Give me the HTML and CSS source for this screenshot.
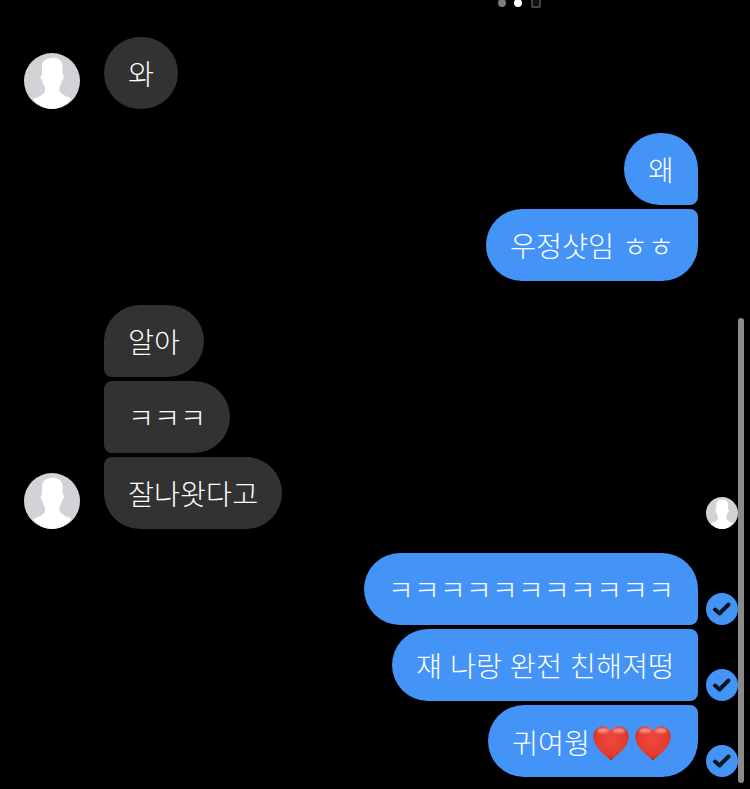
FILE: index.html

```html
<!DOCTYPE html>
<html lang="ko">
<head>
  <meta charset="UTF-8">
  <title>대화</title>
  <link rel="stylesheet" href="styles.css">
</head>
<body>
  <svg class="defs" width="0" height="0" aria-hidden="true">
    <defs>
      <symbol id="avatar" viewBox="0 0 56 56">
        <circle cx="28" cy="28" r="28" fill="#d2d2d7"/>
        <path d="M28 5c-7 0-10 3.500-10 9v8c-1 0-1.500 1-1.300 2.500.2 1.500.8 3 1.800 3.300.5 2.700 1.300 5 2.500 6.700v3c0 3-4 5.500-12 8.500C13 52 20 56 28 56s15-4 19.500-10.500c-8-3-12-5.500-12-8.500v-3c1.200-1.700 2-4 2.500-6.700 1-.3 1.600-1.800 1.800-3.300.2-1.500-.3-2.500-1.300-2.500v-8c0-5.500-3.500-9-10.500-9z" fill="#fff"/>
      </symbol>
      <symbol id="check" viewBox="0 0 32 32">
        <circle cx="16" cy="16" r="16" fill="#4494f8"/>
        <path d="M9 16.500l4.500 4 9-9" fill="none" stroke="#0b1522" stroke-width="4" stroke-linecap="round" stroke-linejoin="round"/>
      </symbol>
      <radialGradient id="heartfill" cx="0.5" cy="0.4" r="0.62">
        <stop offset="0" stop-color="#ee4a3c"/>
        <stop offset="0.7" stop-color="#e33a2e"/>
        <stop offset="1" stop-color="#b8241c"/>
      </radialGradient>
      <filter id="soft" x="-30%" y="-30%" width="160%" height="160%">
        <feGaussianBlur stdDeviation="1.200"/>
      </filter>
      <symbol id="heart" viewBox="0 0 36 35">
        <path d="M18 34.700C13.500 29.500.3 22 .3 10.800.3 4.500 4.800.3 10.200.3c3.500 0 6.300 2 7.800 5.200C19.500 2.300 22.300.3 25.800.3c5.400 0 9.900 4.200 9.900 10.500C35.700 22 22.500 29.500 18 34.700z" fill="url(#heartfill)"/>
        <ellipse cx="10" cy="4.500" rx="6" ry="2.300" fill="#fbb0a4" opacity="0.75" filter="url(#soft)"/>
        <ellipse cx="26" cy="4.500" rx="6" ry="2.300" fill="#fbb0a4" opacity="0.75" filter="url(#soft)"/>
      </symbol>
    </defs>
  </svg>

  <div class="pager">
    <span class="dot"></span>
    <span class="dot on"></span>
    <span class="tile"></span>
  </div>

  <div class="chat">
    <div class="group">
      <div class="row">
        <svg class="avatar"><use href="#avatar"/></svg>
        <div class="bubble in solo">와</div>
      </div>
    </div>

    <div class="group">
      <div class="row out">
        <div class="bubble me top">왜</div>
        <span class="slot"></span>
      </div>
      <div class="row out">
        <div class="bubble me last">우정샷임 ㅎㅎ</div>
        <span class="slot"></span>
      </div>
    </div>

    <div class="group">
      <div class="row">
        <span class="avatar"></span>
        <div class="bubble in first">알아</div>
      </div>
      <div class="row">
        <span class="avatar"></span>
        <div class="bubble in mid">ㅋㅋㅋ</div>
      </div>
      <div class="row">
        <svg class="avatar"><use href="#avatar"/></svg>
        <div class="bubble in last-in">잘나왓다고</div>
        <svg class="read"><use href="#avatar"/></svg>
      </div>
    </div>

    <div class="group">
      <div class="row out">
        <div class="bubble me top">ㅋㅋㅋㅋㅋㅋㅋㅋㅋㅋㅋ</div>
        <svg class="slot"><use href="#check"/></svg>
      </div>
      <div class="row out">
        <div class="bubble me mid-me">쟤 나랑 완전 친해져떵</div>
        <svg class="slot"><use href="#check"/></svg>
      </div>
      <div class="row out">
        <div class="bubble me last emoji">귀여웡<svg class="heart first-heart"><use href="#heart"/></svg><svg class="heart"><use href="#heart"/></svg></div>
        <svg class="slot"><use href="#check"/></svg>
      </div>
    </div>
  </div>

  <div class="scrollbar"></div>
</body>
</html>
```

FILE: styles.css

```css
html, body {
  height: 100%;
}

body {
  margin: 0;
  background: #000;
  color: #fff;
  font-family: "Noto Sans CJK KR", "Noto Sans", sans-serif;
  overflow: hidden;
  position: relative;
}

.defs {
  position: absolute;
}

.pager {
  display: flex;
  align-items: center;
  gap: 8px;
  height: 8px;
  margin-top: -1px;
  padding-left: 498px;
}

.dot {
  width: 8px;
  height: 8px;
  border-radius: 50%;
  background: #7c7c7c;
}

.dot.on {
  background: #fff;
}

.tile {
  width: 6px;
  height: 6px;
  margin-left: 1px;
  border: 2px solid #444;
  border-radius: 2px;
  background: #111;
}

.chat {
  display: flex;
  flex-direction: column;
  gap: 24px;
  padding: 30px 12px 0 24px;
}

.group {
  display: flex;
  flex-direction: column;
  gap: 4px;
}

.row {
  display: flex;
  align-items: flex-end;
  gap: 24px;
}

.row.out {
  justify-content: flex-end;
  gap: 8px;
}

.avatar {
  flex: none;
  width: 56px;
  height: 56px;
}

.read {
  flex: none;
  width: 32px;
  height: 32px;
  margin-left: auto;
}

.slot {
  flex: none;
  width: 32px;
  height: 32px;
}

.bubble {
  box-sizing: border-box;
  display: flex;
  align-items: center;
  height: 72px;
  padding: 1px 24px 0;
  border-radius: 36px;
  font-size: 28.3px;
  font-weight: 300;
  line-height: 1;
  white-space: nowrap;
}

.in {
  background: #323232;
}

.me {
  background: #4494f8;
}

.first {
  border-bottom-left-radius: 8px;
}

.mid {
  border-top-left-radius: 8px;
  border-bottom-left-radius: 8px;
}

.last-in {
  border-top-left-radius: 8px;
}

.top {
  border-bottom-right-radius: 8px;
}

.mid-me {
  border-top-right-radius: 8px;
  border-bottom-right-radius: 8px;
}

.last {
  border-top-right-radius: 8px;
}

.emoji {
  padding: 3px 27px 0 24px;
  gap: 6px;
}

.heart {
  flex: none;
  width: 36px;
  height: 35px;
  margin-top: 2px;
}

.first-heart {
  margin-left: -3px;
}

.scrollbar {
  position: absolute;
  top: 318px;
  left: 738px;
  width: 6px;
  height: 465px;
  border-radius: 3px;
  background: #8a8a8a;
}
```
